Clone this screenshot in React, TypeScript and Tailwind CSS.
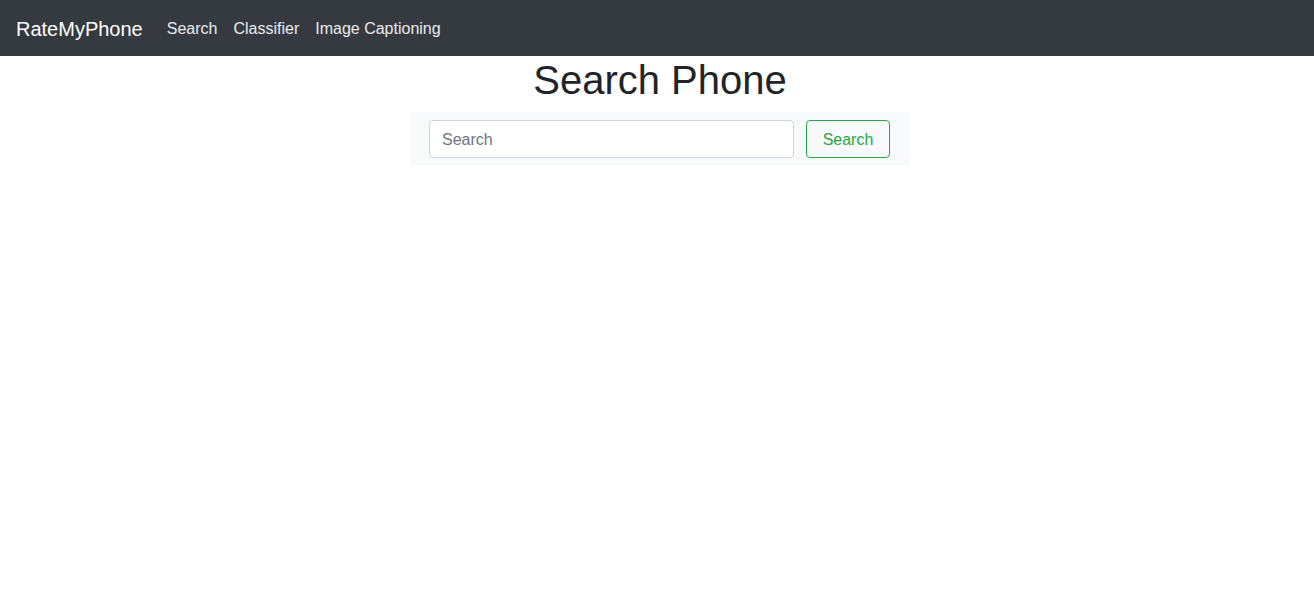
export default function App() {
    return (
        <div className="min-h-screen bg-white font-['Liberation_Sans',Arial,sans-serif] text-[#212529]">
            {/* Navbar */}
            <nav className="h-14 bg-[#343a40] flex items-center px-4 pt-[2px]">
                <a href="#" className="text-[20px] leading-[30px] text-white mr-4">RateMyPhone</a>
                <ul className="flex items-center">
                    <li><a href="#" className="block px-2 text-base text-white/90">Search</a></li>
                    <li><a href="#" className="block px-2 text-base text-white/90">Classifier</a></li>
                    <li><a href="#" className="block px-2 text-base text-white/90">Image Captioning</a></li>
                </ul>
            </nav>

            <div className="flex flex-col items-center pl-[6px]">
                <h1 className="text-[40px] leading-[48px] font-medium mb-2">Search Phone</h1>

                <form className="w-[500px] bg-[#f8f9fa] flex items-center gap-3 pl-[19px] pr-5 pt-2 pb-[7px]" onSubmit={(e) => e.preventDefault()}>
                    <input
                        type="search"
                        placeholder="Search"
                        className="flex-1 min-w-0 h-[38px] px-3 pt-[2px] text-base border border-[#ced4da] rounded bg-white placeholder:text-[#6c757d] outline-none"
                    />
                    <button type="submit" className="w-[84px] h-[38px] pt-[2px] flex items-center justify-center text-base text-[#28a745] border border-[#28a745] rounded">
                        Search
                    </button>
                </form>
            </div>
        </div>
    )
}
